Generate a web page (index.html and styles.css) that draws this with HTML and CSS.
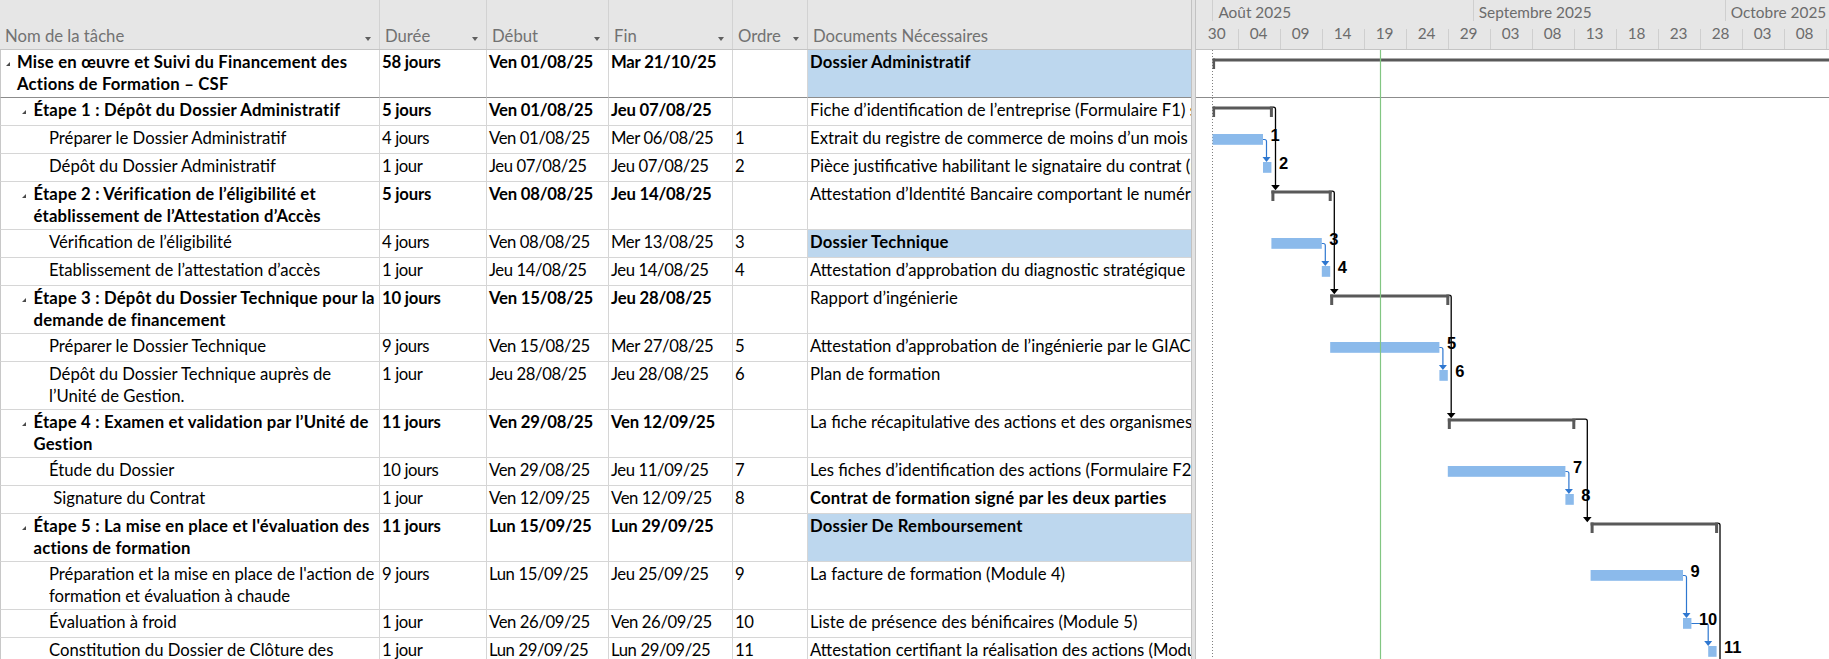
FILE: index.html
```html
<!DOCTYPE html>
<html lang="fr">
<head>
<meta charset="utf-8">
<title>Financement des Actions de Formation – CSF</title>
<link rel="stylesheet" href="styles.css">
</head>
<body>
<div class="app">
  <div class="sheet">
    <div class="row head">
      <div class="hc"><span>Nom de la tâche</span><i class="dd"></i></div>
      <div class="hc"><span>Durée</span><i class="dd"></i></div>
      <div class="hc"><span>Début</span><i class="dd"></i></div>
      <div class="hc"><span>Fin</span><i class="dd"></i></div>
      <div class="hc"><span>Ordre</span><i class="dd"></i></div>
      <div class="hc last"><span>Documents Nécessaires</span></div>
    </div>

    <div class="row tall sum top">
      <div class="c name l0"><i class="tri"></i><span>Mise en œuvre et Suivi du Financement des<br>Actions de Formation – CSF</span></div>
      <div class="c num">58 jours</div>
      <div class="c num">Ven 01/08/25</div>
      <div class="c num">Mar 21/10/25</div>
      <div class="c num"></div>
      <div class="c doc hl">Dossier Administratif</div>
    </div>

    <div class="row sum">
      <div class="c name l1"><i class="tri"></i><span>Étape 1 : Dépôt du Dossier Administratif</span></div>
      <div class="c num">5 jours</div>
      <div class="c num">Ven 01/08/25</div>
      <div class="c num">Jeu 07/08/25</div>
      <div class="c num"></div>
      <div class="c doc">Fiche d’identification de l’entreprise (Formulaire F1) signée et cachetée</div>
    </div>

    <div class="row">
      <div class="c name l2"><span>Préparer le Dossier Administratif</span></div>
      <div class="c num">4 jours</div>
      <div class="c num">Ven 01/08/25</div>
      <div class="c num">Mer 06/08/25</div>
      <div class="c num">1</div>
      <div class="c doc">Extrait du registre de commerce de moins d’un mois</div>
    </div>

    <div class="row">
      <div class="c name l2"><span>Dépôt du Dossier Administratif</span></div>
      <div class="c num">1 jour</div>
      <div class="c num">Jeu 07/08/25</div>
      <div class="c num">Jeu 07/08/25</div>
      <div class="c num">2</div>
      <div class="c doc">Pièce justificative habilitant le signataire du contrat (procuration)</div>
    </div>

    <div class="row tall sum">
      <div class="c name l1"><i class="tri"></i><span>Étape 2 : Vérification de l’éligibilité et<br>établissement de l’Attestation d’Accès</span></div>
      <div class="c num">5 jours</div>
      <div class="c num">Ven 08/08/25</div>
      <div class="c num">Jeu 14/08/25</div>
      <div class="c num"></div>
      <div class="c doc">Attestation d’Identité Bancaire comportant le numéro de compte</div>
    </div>

    <div class="row">
      <div class="c name l2"><span>Vérification de l’éligibilité</span></div>
      <div class="c num">4 jours</div>
      <div class="c num">Ven 08/08/25</div>
      <div class="c num">Mer 13/08/25</div>
      <div class="c num">3</div>
      <div class="c doc hl">Dossier Technique</div>
    </div>

    <div class="row">
      <div class="c name l2"><span>Etablissement de l’attestation d’accès</span></div>
      <div class="c num">1 jour</div>
      <div class="c num">Jeu 14/08/25</div>
      <div class="c num">Jeu 14/08/25</div>
      <div class="c num">4</div>
      <div class="c doc">Attestation d’approbation du diagnostic stratégique</div>
    </div>

    <div class="row tall sum">
      <div class="c name l1"><i class="tri"></i><span>Étape 3 : Dépôt du Dossier Technique pour la<br>demande de financement</span></div>
      <div class="c num">10 jours</div>
      <div class="c num">Ven 15/08/25</div>
      <div class="c num">Jeu 28/08/25</div>
      <div class="c num"></div>
      <div class="c doc">Rapport d’ingénierie</div>
    </div>

    <div class="row">
      <div class="c name l2"><span>Préparer le Dossier Technique</span></div>
      <div class="c num">9 jours</div>
      <div class="c num">Ven 15/08/25</div>
      <div class="c num">Mer 27/08/25</div>
      <div class="c num">5</div>
      <div class="c doc">Attestation d’approbation de l’ingénierie par le GIAC</div>
    </div>

    <div class="row tall">
      <div class="c name l2"><span>Dépôt du Dossier Technique auprès de<br>l’Unité de Gestion.</span></div>
      <div class="c num">1 jour</div>
      <div class="c num">Jeu 28/08/25</div>
      <div class="c num">Jeu 28/08/25</div>
      <div class="c num">6</div>
      <div class="c doc">Plan de formation</div>
    </div>

    <div class="row tall sum">
      <div class="c name l1"><i class="tri"></i><span>Étape 4 : Examen et validation par l’Unité de<br>Gestion</span></div>
      <div class="c num">11 jours</div>
      <div class="c num">Ven 29/08/25</div>
      <div class="c num">Ven 12/09/25</div>
      <div class="c num"></div>
      <div class="c doc">La fiche récapitulative des actions et des organismes de formation</div>
    </div>

    <div class="row">
      <div class="c name l2"><span>Étude du Dossier</span></div>
      <div class="c num">10 jours</div>
      <div class="c num">Ven 29/08/25</div>
      <div class="c num">Jeu 11/09/25</div>
      <div class="c num">7</div>
      <div class="c doc">Les fiches d’identification des actions (Formulaire F2)</div>
    </div>

    <div class="row">
      <div class="c name l2"><span>&nbsp;Signature du Contrat</span></div>
      <div class="c num">1 jour</div>
      <div class="c num">Ven 12/09/25</div>
      <div class="c num">Ven 12/09/25</div>
      <div class="c num">8</div>
      <div class="c doc strong">Contrat de formation signé par les deux parties</div>
    </div>

    <div class="row tall sum">
      <div class="c name l1"><i class="tri"></i><span>Étape 5 : La mise en place et l'évaluation des<br>actions de formation</span></div>
      <div class="c num">11 jours</div>
      <div class="c num">Lun 15/09/25</div>
      <div class="c num">Lun 29/09/25</div>
      <div class="c num"></div>
      <div class="c doc hl">Dossier De Remboursement</div>
    </div>

    <div class="row tall">
      <div class="c name l2"><span>Préparation et la mise en place de l'action de<br>formation et évaluation à chaude</span></div>
      <div class="c num">9 jours</div>
      <div class="c num">Lun 15/09/25</div>
      <div class="c num">Jeu 25/09/25</div>
      <div class="c num">9</div>
      <div class="c doc">La facture de formation (Module 4)</div>
    </div>

    <div class="row">
      <div class="c name l2"><span>Évaluation à froid</span></div>
      <div class="c num">1 jour</div>
      <div class="c num">Ven 26/09/25</div>
      <div class="c num">Ven 26/09/25</div>
      <div class="c num">10</div>
      <div class="c doc">Liste de présence des bénificaires (Module 5)</div>
    </div>

    <div class="row tall">
      <div class="c name l2"><span>Constitution du Dossier de Clôture des<br>actions de formation</span></div>
      <div class="c num">1 jour</div>
      <div class="c num">Lun 29/09/25</div>
      <div class="c num">Lun 29/09/25</div>
      <div class="c num">11</div>
      <div class="c doc">Attestation certifiant la réalisation des actions (Module 6)</div>
    </div>
  </div>

  <div class="split"></div>

  <div class="gantt">
    <div class="ghead">
      <div class="months">
        <div class="mo lead"></div>
        <div class="mo aug">Août 2025</div>
        <div class="mo sep">Septembre 2025</div>
        <div class="mo oct">Octobre 2025</div>
      </div>
      <div class="days">
        <div class="dy first">30</div>
        <div class="dy">04</div>
        <div class="dy">09</div>
        <div class="dy">14</div>
        <div class="dy">19</div>
        <div class="dy">24</div>
        <div class="dy">29</div>
        <div class="dy">03</div>
        <div class="dy">08</div>
        <div class="dy">13</div>
        <div class="dy">18</div>
        <div class="dy">23</div>
        <div class="dy">28</div>
        <div class="dy">03</div>
        <div class="dy">08</div>
        <div class="dy">13</div>
      </div>
    </div>

    <svg class="chart" width="633" height="609" viewBox="0 0 633 609">
      <line class="pstart" x1="16.5" y1="0" x2="16.5" y2="609"/>
      <line class="rowsep" x1="0" y1="47.5" x2="633" y2="47.5"/>

      <g class="summary">
        <rect x="16.6" y="8.5" width="620" height="3"/>
        <rect x="16.6" y="8.5" width="2.5" height="10.5"/>

        <rect x="16.6" y="56.5" width="60.3" height="3"/>
        <rect x="16.6" y="56.5" width="2.5" height="10.5"/>
        <rect x="73.9" y="56.5" width="3" height="10.5"/>

        <rect x="75.4" y="140.5" width="60.3" height="3"/>
        <rect x="75.4" y="140.5" width="3" height="10.5"/>
        <rect x="132.7" y="140.5" width="3" height="10.5"/>

        <rect x="134.2" y="244.5" width="119.1" height="3"/>
        <rect x="134.2" y="244.5" width="3" height="10.5"/>
        <rect x="250.3" y="244.5" width="3" height="10.5"/>

        <rect x="251.8" y="368.5" width="127.5" height="3"/>
        <rect x="251.8" y="368.5" width="3" height="10.5"/>
        <rect x="376.3" y="368.5" width="3" height="10.5"/>

        <rect x="394.6" y="472.5" width="127.5" height="3"/>
        <rect x="394.6" y="472.5" width="3" height="10.5"/>
        <rect x="519.1" y="472.5" width="3" height="10.5"/>
      </g>

      <g class="task">
        <rect x="16.6" y="84" width="50.4" height="10.8"/>
        <rect x="67" y="112" width="8.4" height="10.8"/>
        <rect x="75.4" y="188" width="50.4" height="10.8"/>
        <rect x="125.8" y="216" width="8.4" height="10.8"/>
        <rect x="134.2" y="292" width="109.2" height="10.8"/>
        <rect x="243.4" y="320" width="8.4" height="10.8"/>
        <rect x="251.8" y="416" width="117.6" height="10.8"/>
        <rect x="369.4" y="444" width="8.4" height="10.8"/>
        <rect x="394.6" y="520" width="92.4" height="10.8"/>
        <rect x="487" y="568" width="8.4" height="10.8"/>
        <rect x="512.2" y="596" width="8.4" height="10.8"/>
      </g>

      <line class="today" x1="184.5" y1="0" x2="184.5" y2="609"/>

      <g class="slink">
        <path d="M76.9 57.2 H77.5 Q79.5 57.2 79.5 59.2 V135"/>
        <path d="M135.7 141.2 H136.3 Q138.3 141.2 138.3 143.2 V239"/>
        <path d="M253.3 245.2 H253.2 Q255.2 245.2 255.2 247.2 V363"/>
        <path d="M379.3 369.2 H389.3 Q391.3 369.2 391.3 371.2 V467"/>
        <path d="M522.1 473.2 H522 Q524 473.2 524 475.2 V609"/>
      </g>
      <g class="sarrow">
        <polygon points="75.2,135 83.8,135 79.5,140.2"/>
        <polygon points="134,239 142.6,239 138.3,244.2"/>
        <polygon points="250.9,363 259.5,363 255.2,368.2"/>
        <polygon points="387,467 395.6,467 391.3,472.2"/>
      </g>

      <g class="tlink">
        <path d="M67 89.5 H68.5 Q70.5 89.5 70.5 91.5 V107"/>
        <path d="M125.8 193.5 H127.3 Q129.3 193.5 129.3 195.5 V211"/>
        <path d="M243.4 297.5 H244.9 Q246.9 297.5 246.9 299.5 V315"/>
        <path d="M369.4 421.5 H370.9 Q372.9 421.5 372.9 423.5 V439"/>
        <path d="M487 525.5 H488.5 Q490.5 525.5 490.5 527.5 V563"/>
        <path d="M495.4 573.5 H510.2 Q512.2 573.5 512.2 575.5 V591"/>
      </g>
      <g class="tarrow">
        <polygon points="66.5,107 74.5,107 70.5,112"/>
        <polygon points="125.3,211 133.3,211 129.3,216"/>
        <polygon points="242.9,315 250.9,315 246.9,320"/>
        <polygon points="368.9,439 376.9,439 372.9,444"/>
        <polygon points="486.5,563 494.5,563 490.5,568"/>
        <polygon points="508.2,591 516.2,591 512.2,596"/>
      </g>

      <g class="lbl">
        <text x="74.5" y="91">1</text>
        <text x="82.9" y="119">2</text>
        <text x="133.3" y="195">3</text>
        <text x="141.7" y="223">4</text>
        <text x="250.9" y="299">5</text>
        <text x="259.3" y="327">6</text>
        <text x="376.9" y="423">7</text>
        <text x="385.3" y="451">8</text>
        <text x="494.5" y="527">9</text>
        <text x="502.9" y="575">10</text>
        <text x="528.1" y="603">11</text>
      </g>
    </svg>
  </div>
</div>
</body>
</html>
```

FILE: styles.css
```css
* {
  box-sizing: border-box;
}

html,
body {
  margin: 0;
  padding: 0;
}

body {
  width: 1829px;
  height: 659px;
  overflow: hidden;
  background: #ffffff;
  font-family: Lato, "Liberation Sans", sans-serif;
  font-size: 16.7px;
  color: #000000;
}

.app {
  display: flex;
  height: 659px;
  overflow: hidden;
}

/* ---------- task sheet ---------- */

.sheet {
  flex: none;
  width: 1191px;
}

.row {
  display: grid;
  grid-template-columns: 380px 107px 122px 124px 75px 383px;
  height: 28px;
}

.row.tall {
  height: 48px;
}

.row.head {
  height: 50px;
  background: #e6e6e6;
  border-bottom: 1px solid #c4c4c4;
}

.hc {
  display: flex;
  justify-content: space-between;
  align-items: flex-start;
  padding: 26px 8px 0 5px;
  line-height: 21px;
  color: #727272;
  border-right: 1px solid #d2d2d2;
  white-space: nowrap;
  overflow: hidden;
}

.hc.last {
  border-right: none;
}

.dd {
  flex: none;
  margin-top: 11px;
  width: 0;
  height: 0;
  border-left: 3.5px solid transparent;
  border-right: 3.5px solid transparent;
  border-top: 4px solid #5f5f5f;
}

.c {
  padding: 2px 2px 0 2px;
  line-height: 21.5px;
  white-space: nowrap;
  overflow: hidden;
  border-right: 1px solid #d6d6d6;
  border-bottom: 1px solid #d6d6d6;
}

.c.num {
  letter-spacing: -0.4px;
}

.c.doc {
  border-right: none;
}

.row.top .c {
  border-bottom-color: #8c8c8c;
}

.sum .c {
  font-weight: 700;
  letter-spacing: 0.2px;
}

.sum .c.num {
  letter-spacing: -0.2px;
}

.sum .c.doc {
  font-weight: 400;
  letter-spacing: 0;
}

.sum .c.doc.hl,
.c.doc.hl,
.c.doc.strong {
  font-weight: 700;
  letter-spacing: 0.2px;
}

.c.hl {
  background: #bdd7ee;
}

.name {
  display: flex;
  align-items: flex-start;
  border-left: 1px solid #c8c8c8;
}

.name.l0 {
  padding-left: 5px;
}

.name.l1 {
  padding-left: 21px;
}

.name.l2 {
  padding-left: 48px;
}

.tri {
  flex: none;
  width: 0;
  height: 0;
  margin-top: 10px;
  margin-right: 7px;
  border-left: 4.5px solid transparent;
  border-bottom: 4.5px solid #4a4a4a;
}

.name.l1 .tri {
  margin-right: 7.5px;
}

/* ---------- splitter ---------- */

.split {
  flex: none;
  width: 5px;
  background: #e2e2e2;
  border-left: 1px solid #c2c2c2;
  border-right: 1px solid #c2c2c2;
}

/* ---------- gantt ---------- */

.gantt {
  flex: 1;
  min-width: 0;
  display: flex;
  flex-direction: column;
  overflow: hidden;
}

.ghead {
  flex: none;
  height: 50px;
  background: #e6e6e6;
  border-bottom: 1px solid #c4c4c4;
  color: #6c6c6c;
  font-size: 15.4px;
}

.months {
  display: flex;
  height: 22px;
}

.mo {
  flex: none;
  height: 22px;
  padding: 2px 0 0 6px;
  line-height: 20px;
  white-space: nowrap;
  overflow: hidden;
  background: linear-gradient(#cfcfcf, #cfcfcf) left top / 1px 21px no-repeat;
}

.mo.lead {
  width: 16.4px;
  background: none;
}

.mo.aug {
  width: 260.4px;
}

.mo.sep {
  width: 252px;
}

.mo.oct {
  flex: 1;
}

.days {
  display: flex;
  height: 27px;
}

.dy {
  flex: none;
  width: 42px;
  padding-top: 1px;
  line-height: 21px;
  text-align: center;
  overflow: hidden;
  background: linear-gradient(#cfcfcf, #cfcfcf) left bottom / 1px 20px no-repeat;
}

.dy.first {
  width: 41.6px;
  background: none;
}

.chart {
  display: block;
  flex: none;
}

.pstart {
  stroke: #808080;
  stroke-width: 1;
  stroke-dasharray: 1 2;
}

.rowsep {
  stroke: #8c8c8c;
  stroke-width: 1;
}

.today {
  stroke: #82c682;
  stroke-width: 1.2;
}

.summary rect {
  fill: #595959;
}

.task rect {
  fill: #8bbaeb;
}

.slink path {
  fill: none;
  stroke: #000000;
  stroke-width: 1.3;
}

.sarrow polygon {
  fill: #000000;
}

.tlink path {
  fill: none;
  stroke: #2e77d0;
  stroke-width: 1.2;
}

.tarrow polygon {
  fill: #2e77d0;
}

.lbl text {
  font-family: "Liberation Sans", Arial, sans-serif;
  font-weight: 700;
  font-size: 16.5px;
  fill: #000000;
}
```
